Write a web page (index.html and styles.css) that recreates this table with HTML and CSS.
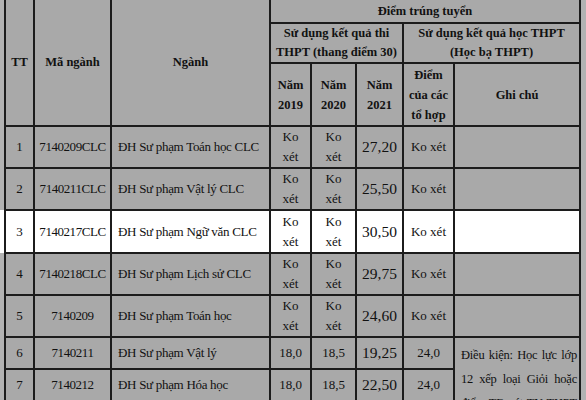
FILE: index.html
```html
<!DOCTYPE html>
<html lang="vi">
<head>
<meta charset="utf-8">
<title>Điểm trúng tuyển</title>
<link rel="stylesheet" href="styles.css">
</head>
<body>
<table class="scores">
  <colgroup>
    <col class="c-tt"><col class="c-code"><col class="c-name"><col class="c-y19"><col class="c-y20"><col class="c-y21"><col class="c-hb"><col class="c-note">
  </colgroup>
  <thead>
    <tr class="h1">
      <th rowspan="3">TT</th>
      <th rowspan="3">Mã ngành</th>
      <th rowspan="3">Ngành</th>
      <th colspan="5">Điểm trúng tuyển</th>
    </tr>
    <tr class="h2">
      <th colspan="3">Sử dụng kết quả thi<br>THPT (thang điểm 30)</th>
      <th colspan="2">Sử dụng kết quả học THPT<br>(Học bạ THPT)</th>
    </tr>
    <tr class="h3">
      <th>Năm<br>2019</th>
      <th>Năm<br>2020</th>
      <th>Năm<br>2021</th>
      <th>Điểm<br>của các<br>tổ hợp</th>
      <th>Ghi chú</th>
    </tr>
  </thead>
  <tbody>
    <tr class="r2">
      <td>1</td><td class="code">7140209CLC</td><td class="name">ĐH Sư phạm Toán học CLC</td>
      <td>Ko<br>xét</td><td>Ko<br>xét</td><td class="big">27,20</td><td>Ko xét</td><td></td>
    </tr>
    <tr class="r2">
      <td>2</td><td class="code">7140211CLC</td><td class="name">ĐH Sư phạm Vật lý CLC</td>
      <td>Ko<br>xét</td><td>Ko<br>xét</td><td class="big">25,50</td><td>Ko xét</td><td></td>
    </tr>
    <tr class="r3 hl">
      <td>3</td><td class="code">7140217CLC</td><td class="name">ĐH Sư phạm Ngữ văn CLC</td>
      <td>Ko<br>xét</td><td>Ko<br>xét</td><td class="big">30,50</td><td>Ko xét</td><td></td>
    </tr>
    <tr class="r2">
      <td>4</td><td class="code">7140218CLC</td><td class="name">ĐH Sư phạm Lịch sử CLC</td>
      <td>Ko<br>xét</td><td>Ko<br>xét</td><td class="big">29,75</td><td>Ko xét</td><td></td>
    </tr>
    <tr class="r2">
      <td>5</td><td class="code">7140209</td><td class="name">ĐH Sư phạm Toán học</td>
      <td>Ko<br>xét</td><td>Ko<br>xét</td><td class="big">24,60</td><td>Ko xét</td><td></td>
    </tr>
    <tr class="r1">
      <td>6</td><td class="code">7140211</td><td class="name">ĐH Sư phạm Vật lý</td>
      <td>18,0</td><td>18,5</td><td class="big">19,25</td><td>24,0</td>
      <td class="note" rowspan="4">Điều kiện: Học lực lớp 12 xếp loại Giỏi hoặc điểm TB xét TN THPT từ 8,0 trở lên</td>
    </tr>
    <tr class="r1">
      <td>7</td><td class="code">7140212</td><td class="name">ĐH Sư phạm Hóa học</td>
      <td>18,0</td><td>18,5</td><td class="big">22,50</td><td>24,0</td>
    </tr>
    <tr class="r1">
      <td>8</td><td class="code">7140213</td><td class="name">ĐH Sư phạm Sinh học</td>
      <td>18,0</td><td>18,5</td><td class="big">19,00</td><td>24,0</td>
    </tr>
    <tr class="r1">
      <td>9</td><td class="code">7140217</td><td class="name">ĐH Sư phạm Ngữ văn</td>
      <td>18,0</td><td>18,5</td><td class="big">25,00</td><td>24,0</td>
    </tr>
  </tbody>
</table>
</body>
</html>
```
FILE: styles.css
```css
html, body {
  margin: 0;
  padding: 0;
  overflow: hidden;
  background: #b2b2b2;
}

body {
  padding: 0 0 0 4px;
  font-family: "Liberation Serif", "Times New Roman", serif;
  color: #111111;
}

.scores {
  border-collapse: collapse;
  table-layout: fixed;
  width: 576px;
  margin-top: -3px;
  background: #a9a9a9;
  font-size: 13px;
  line-height: 20px;
}

.c-tt { width: 29px; }
.c-code { width: 77px; }
.c-name { width: 159px; }
.c-y19 { width: 41px; }
.c-y20 { width: 45px; }
.c-y21 { width: 47px; }
.c-hb { width: 51px; }
.c-note { width: 126px; }

.scores th,
.scores td {
  border: 2px solid #1c1c1c;
  padding: 0 5px;
  text-align: center;
  vertical-align: middle;
}

.scores th {
  font-weight: bold;
  font-size: 12.5px;
  padding: 0 1px;
  white-space: nowrap;
}

.h1 { height: 25px; }
.h2 { height: 40px; }
.h2 th { line-height: 19px; }
.h3 { height: 63px; }
.h3 th { line-height: 20px; }

.r2 { height: 42px; }
.r3 { height: 43px; }
.r1 { height: 32px; }

.scores td.code {
  padding: 0 1px;
  letter-spacing: -0.45px;
  white-space: nowrap;
}

.scores td.name {
  text-align: left;
  padding: 0 2px 0 6px;
  letter-spacing: -0.3px;
  white-space: nowrap;
}

.scores td.big {
  font-size: 15.5px;
  padding: 0 2px;
}

.hl td {
  background: #ffffff;
}

.hl td:first-child {
  box-shadow: -6px 0 0 #ffffff;
}

.scores td.note {
  vertical-align: top;
  text-align: justify;
  padding: 5px 2px 0 6px;
  font-size: 12.5px;
  line-height: 24px;
  letter-spacing: -0.2px;
}
```
